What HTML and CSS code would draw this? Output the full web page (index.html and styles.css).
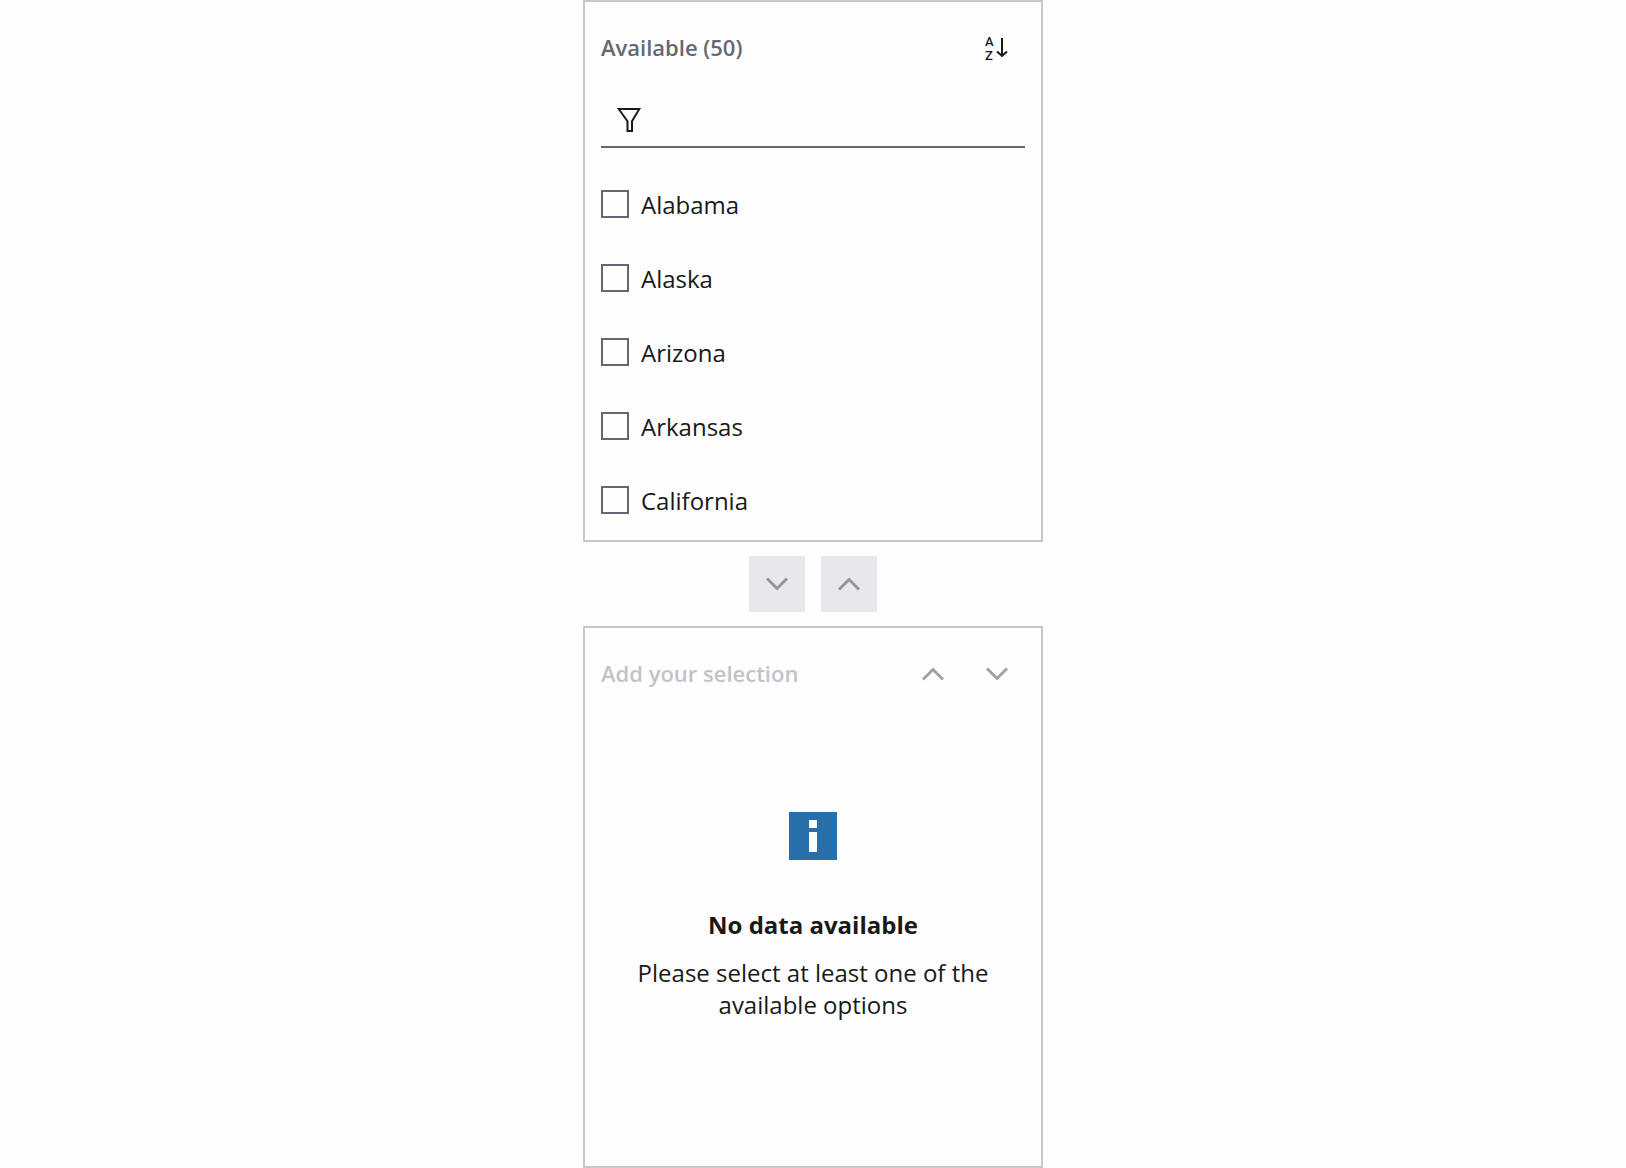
FILE: index.html
```html
<!DOCTYPE html>
<html lang="en">
<head>
<meta charset="utf-8">
<meta name="viewport" content="width=device-width, initial-scale=1">
<title>State selection</title>
<link rel="stylesheet" href="styles.css">
</head>
<body>
<main class="dual-list">
  <section class="panel" aria-labelledby="available-title">
    <header class="panel-header">
      <h2 class="panel-title" id="available-title">Available (50)</h2>
      <button class="icon-button" type="button" aria-label="Sort A to Z">
        <svg class="icon" viewBox="0 0 32 32" aria-hidden="true">
          <text class="icon-letter" x="4" y="14">A</text>
          <text class="icon-letter" x="4" y="28">Z</text>
          <path d="M21 6v18M16 19.500l5 4.500 5-4.500" fill="none" stroke="currentColor" stroke-width="2"/>
        </svg>
      </button>
    </header>
    <div class="filter">
      <svg class="filter-icon" viewBox="0 0 24 24" aria-hidden="true">
        <path d="M1.700 1h20.600l-7.300 12.200V23h-4.500v-9.800z" fill="none" stroke="currentColor" stroke-width="2"/>
      </svg>
      <input class="filter-input" type="text" aria-label="Filter available states">
    </div>
    <ul class="options">
      <li><label class="option"><input class="checkbox" type="checkbox">Alabama</label></li>
      <li><label class="option"><input class="checkbox" type="checkbox">Alaska</label></li>
      <li><label class="option"><input class="checkbox" type="checkbox">Arizona</label></li>
      <li><label class="option"><input class="checkbox" type="checkbox">Arkansas</label></li>
      <li><label class="option"><input class="checkbox" type="checkbox">California</label></li>
    </ul>
  </section>

  <div class="transfer">
    <button class="icon-button filled" type="button" disabled aria-label="Add to selection">
      <svg class="icon" viewBox="0 0 32 32" aria-hidden="true"><path class="chevron" d="M6 10.500l10 10 10-10"/></svg>
    </button>
    <button class="icon-button filled" type="button" disabled aria-label="Remove from selection">
      <svg class="icon" viewBox="0 0 32 32" aria-hidden="true"><path class="chevron" d="M6 21.500l10-10 10 10"/></svg>
    </button>
  </div>

  <section class="panel" aria-labelledby="selected-title">
    <header class="panel-header">
      <h2 class="panel-title muted" id="selected-title">Add your selection</h2>
      <div class="actions">
        <button class="icon-button" type="button" disabled aria-label="Move up">
          <svg class="icon" viewBox="0 0 32 32" aria-hidden="true"><path class="chevron" d="M6 21.500l10-10 10 10"/></svg>
        </button>
        <button class="icon-button" type="button" disabled aria-label="Move down">
          <svg class="icon" viewBox="0 0 32 32" aria-hidden="true"><path class="chevron" d="M6 10.500l10 10 10-10"/></svg>
        </button>
      </div>
    </header>
    <div class="empty">
      <svg class="info" viewBox="0 0 48 48" aria-hidden="true">
        <path fill="#2770aa" d="M0 0h48v48H0z"/>
        <path fill="#fff" d="M20 8h8v8h-8zM20 20h8v20h-8z"/>
      </svg>
      <h3 class="empty-title">No data available</h3>
      <p class="empty-text">Please select at least one of the available options</p>
    </div>
  </section>
</main>
</body>
</html>
```
FILE: styles.css
```css
* {
  box-sizing: border-box;
}

body {
  margin: 0;
  background: #fefefe;
  color: #191919;
  font-family: "Open Sans", "Noto Sans", sans-serif;
  font-size: 24px;
  line-height: 32px;
}

h2, h3, p, ul {
  margin: 0;
  padding: 0;
}

.dual-list {
  display: grid;
  grid-template-rows: auto auto 1fr;
  gap: 14px;
  width: 100%;
  max-width: 460px;
  min-height: 100vh;
  margin: 0 auto;
}

.panel {
  padding: 18px 16px 12px;
  border: 2px solid #c5c9cf;
}

.panel-header {
  display: flex;
  align-items: center;
  justify-content: space-between;
}

.panel-title {
  padding-bottom: 2px;
  color: #646873;
  font-size: 22px;
  font-weight: 600;
}

.panel-title.muted {
  color: #c2c3c7;
}

.actions {
  display: flex;
  gap: 8px;
}

.icon-button {
  display: flex;
  align-items: center;
  justify-content: center;
  width: 56px;
  height: 56px;
  padding: 0;
  border: 0;
  background: transparent;
  color: #191919;
}

.icon-button:disabled {
  color: #a0a1a2;
}

.icon-button.filled {
  background: #e7e8ec;
  color: #949596;
}

.icon {
  width: 32px;
  height: 32px;
}

.icon-letter {
  fill: currentColor;
  font-family: Roboto, sans-serif;
  font-size: 13px;
  font-weight: 500;
}

.chevron {
  fill: none;
  stroke: currentColor;
  stroke-width: 3;
}

.filter {
  display: flex;
  align-items: center;
  gap: 16px;
  height: 56px;
  margin-top: 16px;
  padding: 2px 16px 0;
  border-bottom: 2px solid #646873;
}

.filter-icon {
  flex: none;
  width: 24px;
  height: 24px;
}

.filter-input {
  flex: 1;
  min-width: 0;
  height: 100%;
  padding: 0;
  border: 0;
  outline: 0;
  background: transparent;
  color: inherit;
  font: inherit;
}

.options {
  display: grid;
  gap: 18px;
  margin-top: 28px;
  list-style: none;
}

.option {
  display: flex;
  align-items: center;
  gap: 12px;
  height: 56px;
  padding-top: 2px;
}

.checkbox {
  appearance: none;
  flex: none;
  width: 28px;
  height: 28px;
  margin: 0 0 2px;
  border: 2px solid #646873;
}

.checkbox:checked {
  background: #646873;
}

.transfer {
  display: flex;
  justify-content: center;
  gap: 16px;
}

.empty {
  display: flex;
  flex-direction: column;
  align-items: center;
  padding: 110px 16px;
  text-align: center;
}

.info {
  width: 48px;
  height: 48px;
}

.empty-title {
  margin-top: 49px;
  font-size: 24px;
  font-weight: 700;
}

.empty-text {
  margin-top: 16px;
}
```
